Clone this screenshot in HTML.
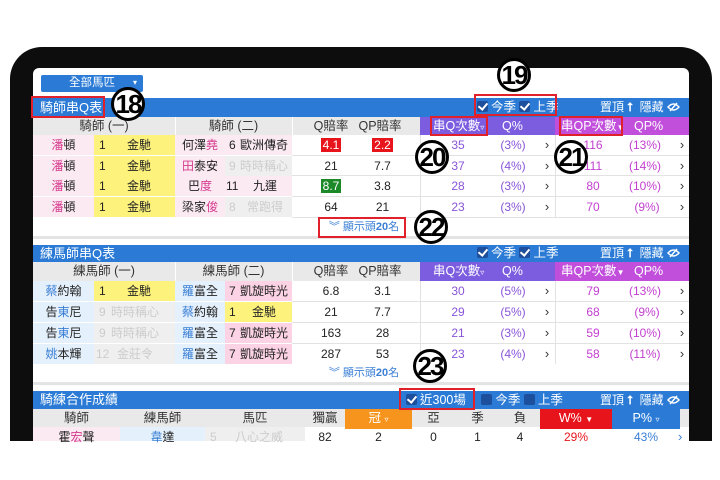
<!DOCTYPE html>
<html><head><meta charset="utf-8"><style>
*{margin:0;padding:0;box-sizing:border-box}
body{width:720px;height:480px;overflow:hidden;background:#fff;position:relative;font-family:"Liberation Sans","Noto Sans CJK TC",sans-serif;font-size:12px;color:#222}
.a{position:absolute}
.c{position:absolute;height:20px;line-height:20px;text-align:center;white-space:nowrap}
.bar{position:absolute;left:33px;width:656px;background:#2b7bd6;color:#fff}
.hd{position:absolute;background:#e9e9e9;color:#333;text-align:center;font-size:12.5px}
.pk{color:#d63a8e}.bl{color:#3a7fd6}
.y{background:#fdf27c}.p{background:#fbeaf2}.g{background:#efefef;color:#ccc}.lb{background:#e4f0fb}.pp{background:#fbd3e4}
.cb{display:inline-block;width:11px;height:11px;background:#1d4f9c;border-radius:2px;vertical-align:-1px;margin-right:3px;position:relative}
.cb.k:after{content:"";position:absolute;left:3px;top:0px;width:4px;height:7px;border:solid #fff;border-width:0 2px 2px 0;transform:rotate(40deg)}
.circ{position:absolute;width:34px;height:34px;border:3px solid #000;border-radius:50%;background:#fff;text-align:center;line-height:28px;font-weight:bold;font-size:26px;letter-spacing:-2px;color:#000;font-family:"Liberation Sans Narrow","Liberation Sans",sans-serif}
.rb{position:absolute;border:2px solid #e0202a}
.q{color:#8a55d8}.qp{color:#c23fd0}
.ar{color:#333;font-size:13px}
.ln{position:absolute;height:1px;background:#e2e2e2}
</style></head><body>
<div class="a" style="left:10px;top:47px;width:702px;height:420px;background:#0d0d0d;border-radius:32px 32px 0 0"></div>
<div class="a" style="left:33px;top:68px;width:656px;height:373px;background:#fff;border-radius:6px 6px 0 0"></div>
<div class="a" style="left:0;top:441px;width:720px;height:39px;background:#fff"></div>

<div class="a" style="left:41px;top:75px;width:102px;height:17px;background:#2b7bd6;border-radius:2px;color:#fff;font-size:11.5px;line-height:17px;text-align:center">全部馬匹<span style="position:absolute;right:6px;top:-1px;font-size:8px">▾</span></div>

<!-- SECTION 1 -->
<div class="bar" style="top:98px;height:19px;line-height:19px"><span style="position:absolute;left:7px;font-size:13px">騎師串Q表</span>
<span style="position:absolute;left:444px;font-size:12.5px"><span class="cb k"></span>今季 <span class="cb k"></span>上季</span>
<span style="position:absolute;left:567px;font-size:12px">置頂 <b>⭡</b>&nbsp; 隱藏 <svg width="13" height="10" viewBox="0 0 13 10" style="vertical-align:-1px"><path d="M1 5 Q6.5 -1 12 5 Q6.5 11 1 5Z" fill="none" stroke="#fff" stroke-width="1.4"/><path d="M3 9 L10 1" stroke="#fff" stroke-width="1.4"/></svg></span></div>
<div class="hd" style="left:33px;top:117px;width:387px;height:18px;line-height:18px">
<span class="a" style="left:0;width:142px">騎師 (一)</span><span class="a" style="left:142px;width:117px">騎師 (二)</span><span class="a" style="left:276px;width:44px">Q賠率</span><span class="a" style="left:322px;width:50px">QP賠率</span></div>
<div class="a" style="left:175px;top:117px;width:1px;height:18px;background:#fff"></div>
<div class="a" style="left:292px;top:117px;width:1px;height:18px;background:#fff"></div>
<div class="a" style="left:420px;top:117px;width:135px;height:18px;background:#7c5de0;color:#fff;line-height:18px;font-size:12.5px"><span class="a" style="left:13px">串Q次數<small style="font-size:8px">▿</small></span><span class="a" style="left:82px">Q%</span></div>
<div class="a" style="left:555px;top:117px;width:134px;height:18px;background:#c14fdc;color:#fff;line-height:18px;font-size:12.5px"><span class="a" style="left:6px">串QP次數<small style="font-size:8px">▼</small></span><span class="a" style="left:79px">QP%</span></div>

<div class="c p" style="left:33px;top:135px;width:61px"><span class="pk">潘</span>頓</div>
<div class="c y" style="left:94px;top:135px;width:81px"><span class="a" style="left:5px">1</span><span class="a" style="left:33px">金馳</span></div>
<div class="c p" style="left:175px;top:135px;width:50px">何澤<span class="pk">堯</span></div>
<div class="c p" style="left:225px;top:135px;width:67px"><span class="a" style="left:4px">6</span><span class="a" style="left:15px">歐洲傳奇</span></div>
<div class="c" style="left:292px;top:135px;width:78px"><span style="background:#e8141b;color:#fff;padding:0 2px">4.1</span></div>
<div class="c" style="left:345px;top:135px;width:75px"><span style="background:#e8141b;color:#fff;padding:0 2px">2.2</span></div>

<div class="c p" style="left:33px;top:156px;width:61px"><span class="pk">潘</span>頓</div>
<div class="c y" style="left:94px;top:156px;width:81px"><span class="a" style="left:5px">1</span><span class="a" style="left:33px">金馳</span></div>
<div class="c p" style="left:175px;top:156px;width:50px"><span class="pk">田</span>泰安</div>
<div class="c g" style="left:225px;top:156px;width:67px"><span class="a" style="left:4px">9</span><span class="a" style="left:15px">時時稱心</span></div>
<div class="c" style="left:292px;top:156px;width:78px">21</div>
<div class="c" style="left:345px;top:156px;width:75px">7.7</div>

<div class="c p" style="left:33px;top:176px;width:61px"><span class="pk">潘</span>頓</div>
<div class="c y" style="left:94px;top:176px;width:81px"><span class="a" style="left:5px">1</span><span class="a" style="left:33px">金馳</span></div>
<div class="c p" style="left:175px;top:176px;width:50px">巴<span class="pk">度</span></div>
<div class="c p" style="left:225px;top:176px;width:67px"><span class="a" style="left:1px">11</span><span class="a" style="left:28px">九運</span></div>
<div class="c" style="left:292px;top:176px;width:78px"><span style="background:#1d8a2a;color:#fff;padding:0 2px">8.7</span></div>
<div class="c" style="left:345px;top:176px;width:75px">3.8</div>

<div class="c p" style="left:33px;top:197px;width:61px"><span class="pk">潘</span>頓</div>
<div class="c y" style="left:94px;top:197px;width:81px"><span class="a" style="left:5px">1</span><span class="a" style="left:33px">金馳</span></div>
<div class="c p" style="left:175px;top:197px;width:50px">梁家<span class="pk">俊</span></div>
<div class="c g" style="left:225px;top:197px;width:67px"><span class="a" style="left:4px">8</span><span class="a" style="left:22px">常跑得</span></div>
<div class="c" style="left:292px;top:197px;width:78px">64</div>
<div class="c" style="left:345px;top:197px;width:75px">21</div>

<div class="ln" style="left:292px;top:155px;width:397px"></div>
<div class="ln" style="left:292px;top:175px;width:397px"></div>
<div class="ln" style="left:292px;top:196px;width:397px"></div>
<div class="ln" style="left:292px;top:217px;width:397px"></div>
<div class="a" style="left:420px;top:135px;width:1px;height:82px;background:#e2e2e2"></div>
<div class="a" style="left:555px;top:135px;width:1px;height:82px;background:#e2e2e2"></div>

<div class="c q" style="left:440px;top:135px;width:36px">35</div><div class="c q" style="left:495px;top:135px;width:36px">(3%)</div><div class="c ar" style="left:540px;top:135px;width:14px">›</div>
<div class="c qp" style="left:575px;top:135px;width:36px">116</div><div class="c qp" style="left:625px;top:135px;width:40px">(13%)</div><div class="c ar" style="left:675px;top:135px;width:14px">›</div>
<div class="c q" style="left:440px;top:156px;width:36px">37</div><div class="c q" style="left:495px;top:156px;width:36px">(4%)</div><div class="c ar" style="left:540px;top:156px;width:14px">›</div>
<div class="c qp" style="left:575px;top:156px;width:36px">111</div><div class="c qp" style="left:625px;top:156px;width:40px">(14%)</div><div class="c ar" style="left:675px;top:156px;width:14px">›</div>
<div class="c q" style="left:440px;top:176px;width:36px">28</div><div class="c q" style="left:495px;top:176px;width:36px">(3%)</div><div class="c ar" style="left:540px;top:176px;width:14px">›</div>
<div class="c qp" style="left:575px;top:176px;width:36px">80</div><div class="c qp" style="left:625px;top:176px;width:40px">(10%)</div><div class="c ar" style="left:675px;top:176px;width:14px">›</div>
<div class="c q" style="left:440px;top:197px;width:36px">23</div><div class="c q" style="left:495px;top:197px;width:36px">(3%)</div><div class="c ar" style="left:540px;top:197px;width:14px">›</div>
<div class="c qp" style="left:575px;top:197px;width:36px">70</div><div class="c qp" style="left:629px;top:197px;width:36px">(9%)</div><div class="c ar" style="left:675px;top:197px;width:14px">›</div>

<div class="c" style="left:322px;top:217px;width:84px;color:#3a7fd6;font-size:11px">︾ 顯示頭<b>20</b>名</div>
<div class="a" style="left:33px;top:236px;width:656px;height:3px;background:#e4e4e4"></div>

<!-- SECTION 2 -->
<div class="bar" style="top:245px;height:17px;line-height:17px"><span style="position:absolute;left:7px;font-size:13px">練馬師串Q表</span>
<span style="position:absolute;left:444px;font-size:12.5px"><span class="cb k"></span>今季 <span class="cb k"></span>上季</span>
<span style="position:absolute;left:567px;font-size:12px">置頂 <b>⭡</b>&nbsp; 隱藏 <svg width="13" height="10" viewBox="0 0 13 10" style="vertical-align:-1px"><path d="M1 5 Q6.5 -1 12 5 Q6.5 11 1 5Z" fill="none" stroke="#fff" stroke-width="1.4"/><path d="M3 9 L10 1" stroke="#fff" stroke-width="1.4"/></svg></span></div>
<div class="hd" style="left:33px;top:262px;width:387px;height:19px;line-height:19px">
<span class="a" style="left:0;width:142px">練馬師 (一)</span><span class="a" style="left:142px;width:117px">練馬師 (二)</span><span class="a" style="left:276px;width:44px">Q賠率</span><span class="a" style="left:322px;width:50px">QP賠率</span></div>
<div class="a" style="left:175px;top:262px;width:1px;height:19px;background:#fff"></div>
<div class="a" style="left:292px;top:262px;width:1px;height:19px;background:#fff"></div>
<div class="a" style="left:420px;top:262px;width:135px;height:19px;background:#7c5de0;color:#fff;line-height:19px;font-size:12.5px"><span class="a" style="left:13px">串Q次數<small style="font-size:8px">▿</small></span><span class="a" style="left:82px">Q%</span></div>
<div class="a" style="left:555px;top:262px;width:134px;height:19px;background:#c14fdc;color:#fff;line-height:19px;font-size:12.5px"><span class="a" style="left:6px">串QP次數<small style="font-size:8px">▼</small></span><span class="a" style="left:79px">QP%</span></div>

<div class="c lb" style="left:33px;top:281px;width:61px"><span class="bl">蔡</span>約翰</div>
<div class="c y" style="left:94px;top:281px;width:81px"><span class="a" style="left:5px">1</span><span class="a" style="left:33px">金馳</span></div>
<div class="c lb" style="left:175px;top:281px;width:50px"><span class="bl">羅</span>富全</div>
<div class="c pp" style="left:225px;top:281px;width:67px"><span class="a" style="left:4px">7</span><span class="a" style="left:15px">凱旋時光</span></div>
<div class="c" style="left:292px;top:281px;width:78px">6.8</div><div class="c" style="left:345px;top:281px;width:75px">3.1</div>

<div class="c lb" style="left:33px;top:302px;width:61px">告<span class="bl">東</span>尼</div>
<div class="c g" style="left:94px;top:302px;width:81px"><span class="a" style="left:5px">9</span><span class="a" style="left:17px">時時稱心</span></div>
<div class="c lb" style="left:175px;top:302px;width:50px"><span class="bl">蔡</span>約翰</div>
<div class="c y" style="left:225px;top:302px;width:67px"><span class="a" style="left:4px">1</span><span class="a" style="left:27px">金馳</span></div>
<div class="c" style="left:292px;top:302px;width:78px">21</div><div class="c" style="left:345px;top:302px;width:75px">7.7</div>

<div class="c lb" style="left:33px;top:323px;width:61px">告<span class="bl">東</span>尼</div>
<div class="c g" style="left:94px;top:323px;width:81px"><span class="a" style="left:5px">9</span><span class="a" style="left:17px">時時稱心</span></div>
<div class="c lb" style="left:175px;top:323px;width:50px"><span class="bl">羅</span>富全</div>
<div class="c pp" style="left:225px;top:323px;width:67px"><span class="a" style="left:4px">7</span><span class="a" style="left:15px">凱旋時光</span></div>
<div class="c" style="left:292px;top:323px;width:78px">163</div><div class="c" style="left:345px;top:323px;width:75px">28</div>

<div class="c lb" style="left:33px;top:344px;width:61px"><span class="bl">姚</span>本輝</div>
<div class="c g" style="left:94px;top:344px;width:81px"><span class="a" style="left:2px">12</span><span class="a" style="left:23px">金莊令</span></div>
<div class="c lb" style="left:175px;top:344px;width:50px"><span class="bl">羅</span>富全</div>
<div class="c pp" style="left:225px;top:344px;width:67px"><span class="a" style="left:4px">7</span><span class="a" style="left:15px">凱旋時光</span></div>
<div class="c" style="left:292px;top:344px;width:78px">287</div><div class="c" style="left:345px;top:344px;width:75px">53</div>

<div class="ln" style="left:292px;top:301px;width:397px"></div>
<div class="ln" style="left:292px;top:322px;width:397px"></div>
<div class="ln" style="left:292px;top:343px;width:397px"></div>
<div class="a" style="left:420px;top:281px;width:1px;height:83px;background:#e2e2e2"></div>
<div class="a" style="left:555px;top:281px;width:1px;height:83px;background:#e2e2e2"></div>

<div class="c q" style="left:440px;top:281px;width:36px">30</div><div class="c q" style="left:495px;top:281px;width:36px">(5%)</div><div class="c ar" style="left:540px;top:281px;width:14px">›</div>
<div class="c qp" style="left:575px;top:281px;width:36px">79</div><div class="c qp" style="left:625px;top:281px;width:40px">(13%)</div><div class="c ar" style="left:675px;top:281px;width:14px">›</div>
<div class="c q" style="left:440px;top:302px;width:36px">29</div><div class="c q" style="left:495px;top:302px;width:36px">(5%)</div><div class="c ar" style="left:540px;top:302px;width:14px">›</div>
<div class="c qp" style="left:575px;top:302px;width:36px">68</div><div class="c qp" style="left:629px;top:302px;width:36px">(9%)</div><div class="c ar" style="left:675px;top:302px;width:14px">›</div>
<div class="c q" style="left:440px;top:323px;width:36px">21</div><div class="c q" style="left:495px;top:323px;width:36px">(3%)</div><div class="c ar" style="left:540px;top:323px;width:14px">›</div>
<div class="c qp" style="left:575px;top:323px;width:36px">59</div><div class="c qp" style="left:625px;top:323px;width:40px">(10%)</div><div class="c ar" style="left:675px;top:323px;width:14px">›</div>
<div class="c q" style="left:440px;top:344px;width:36px">23</div><div class="c q" style="left:495px;top:344px;width:36px">(4%)</div><div class="c ar" style="left:540px;top:344px;width:14px">›</div>
<div class="c qp" style="left:575px;top:344px;width:36px">58</div><div class="c qp" style="left:625px;top:344px;width:40px">(11%)</div><div class="c ar" style="left:675px;top:344px;width:14px">›</div>

<div class="c" style="left:322px;top:363px;width:84px;color:#3a7fd6;font-size:11px">︾ 顯示頭<b>20</b>名</div>
<div class="a" style="left:33px;top:382px;width:656px;height:3px;background:#e4e4e4"></div>

<!-- SECTION 3 -->
<div class="bar" style="top:391px;height:18px;line-height:18px"><span style="position:absolute;left:7px;font-size:13px">騎練合作成績</span>
<span style="position:absolute;left:373px;font-size:12.5px"><span class="cb k"></span>近300場 <span style="display:inline-block;width:2px;height:13px;background:#fff;vertical-align:-2px;margin:0 6px 0 4px"></span><span class="cb"></span>今季 <span class="cb"></span>上季</span>
<span style="position:absolute;left:567px;font-size:12px">置頂 <b>⭡</b>&nbsp; 隱藏 <svg width="13" height="10" viewBox="0 0 13 10" style="vertical-align:-1px"><path d="M1 5 Q6.5 -1 12 5 Q6.5 11 1 5Z" fill="none" stroke="#fff" stroke-width="1.4"/><path d="M3 9 L10 1" stroke="#fff" stroke-width="1.4"/></svg></span></div>
<div class="hd" style="left:33px;top:409px;width:656px;height:18px;line-height:18px">
<span class="a" style="left:0;width:87px">騎師</span><span class="a" style="left:87px;width:85px">練馬師</span><span class="a" style="left:172px;width:100px">馬匹</span><span class="a" style="left:272px;width:40px">獨贏</span>
<span class="a" style="left:312px;width:67px;background:#f7941d;color:#fff">冠 <small style="font-size:8px">▿</small></span>
<span class="a" style="left:379px;width:43px">亞</span><span class="a" style="left:422px;width:45px">季</span><span class="a" style="left:467px;width:40px">負</span>
<span class="a" style="left:507px;width:72px;background:#e8141b;color:#fff">W% <small style="font-size:8px">▼</small></span>
<span class="a" style="left:579px;width:68px;background:#2b7bd6;color:#fff">P% <small style="font-size:8px">▿</small></span></div>
<div class="c p" style="left:33px;top:427px;width:87px;height:14px;line-height:20px">霍<span class="pk">宏</span>聲</div>
<div class="c lb" style="left:120px;top:427px;width:85px;height:14px;line-height:20px"><span class="bl">韋</span>達</div>
<div class="c g" style="left:205px;top:427px;width:100px;height:14px;line-height:20px"><span class="a" style="left:5px">5</span><span class="a" style="left:30px">八心之威</span></div>
<div class="a" style="left:33px;top:427px;width:656px;height:14px;overflow:hidden;line-height:20px">
<span class="a" style="left:272px;width:40px;text-align:center">82</span><span class="a" style="left:312px;width:67px;text-align:center">2</span><span class="a" style="left:379px;width:43px;text-align:center">0</span><span class="a" style="left:422px;width:45px;text-align:center">1</span><span class="a" style="left:467px;width:40px;text-align:center">4</span><span class="a" style="left:507px;width:72px;text-align:center;color:#e8141b">29%</span><span class="a" style="left:579px;width:68px;text-align:center;color:#3a7fd6">43%</span><span class="a" style="left:645px;color:#3a7fd6;font-size:13px">›</span></div>

<div class="rb" style="left:31px;top:96px;width:74px;height:22px"></div>
<div class="rb" style="left:474px;top:94px;width:83px;height:22px"></div>
<div class="rb" style="left:430px;top:116px;width:58px;height:20px"></div>
<div class="rb" style="left:559px;top:116px;width:64px;height:20px"></div>
<div class="rb" style="left:318px;top:217px;width:88px;height:21px"></div>
<div class="rb" style="left:399px;top:388px;width:76px;height:22px"></div>
<div class="circ" style="left:111px;top:87px">18</div>
<div class="circ" style="left:497px;top:58px">19</div>
<div class="circ" style="left:415px;top:140px">20</div>
<div class="circ" style="left:554px;top:140px">21</div>
<div class="circ" style="left:414px;top:210px">22</div>
<div class="circ" style="left:413px;top:349px">23</div>
</body></html>
